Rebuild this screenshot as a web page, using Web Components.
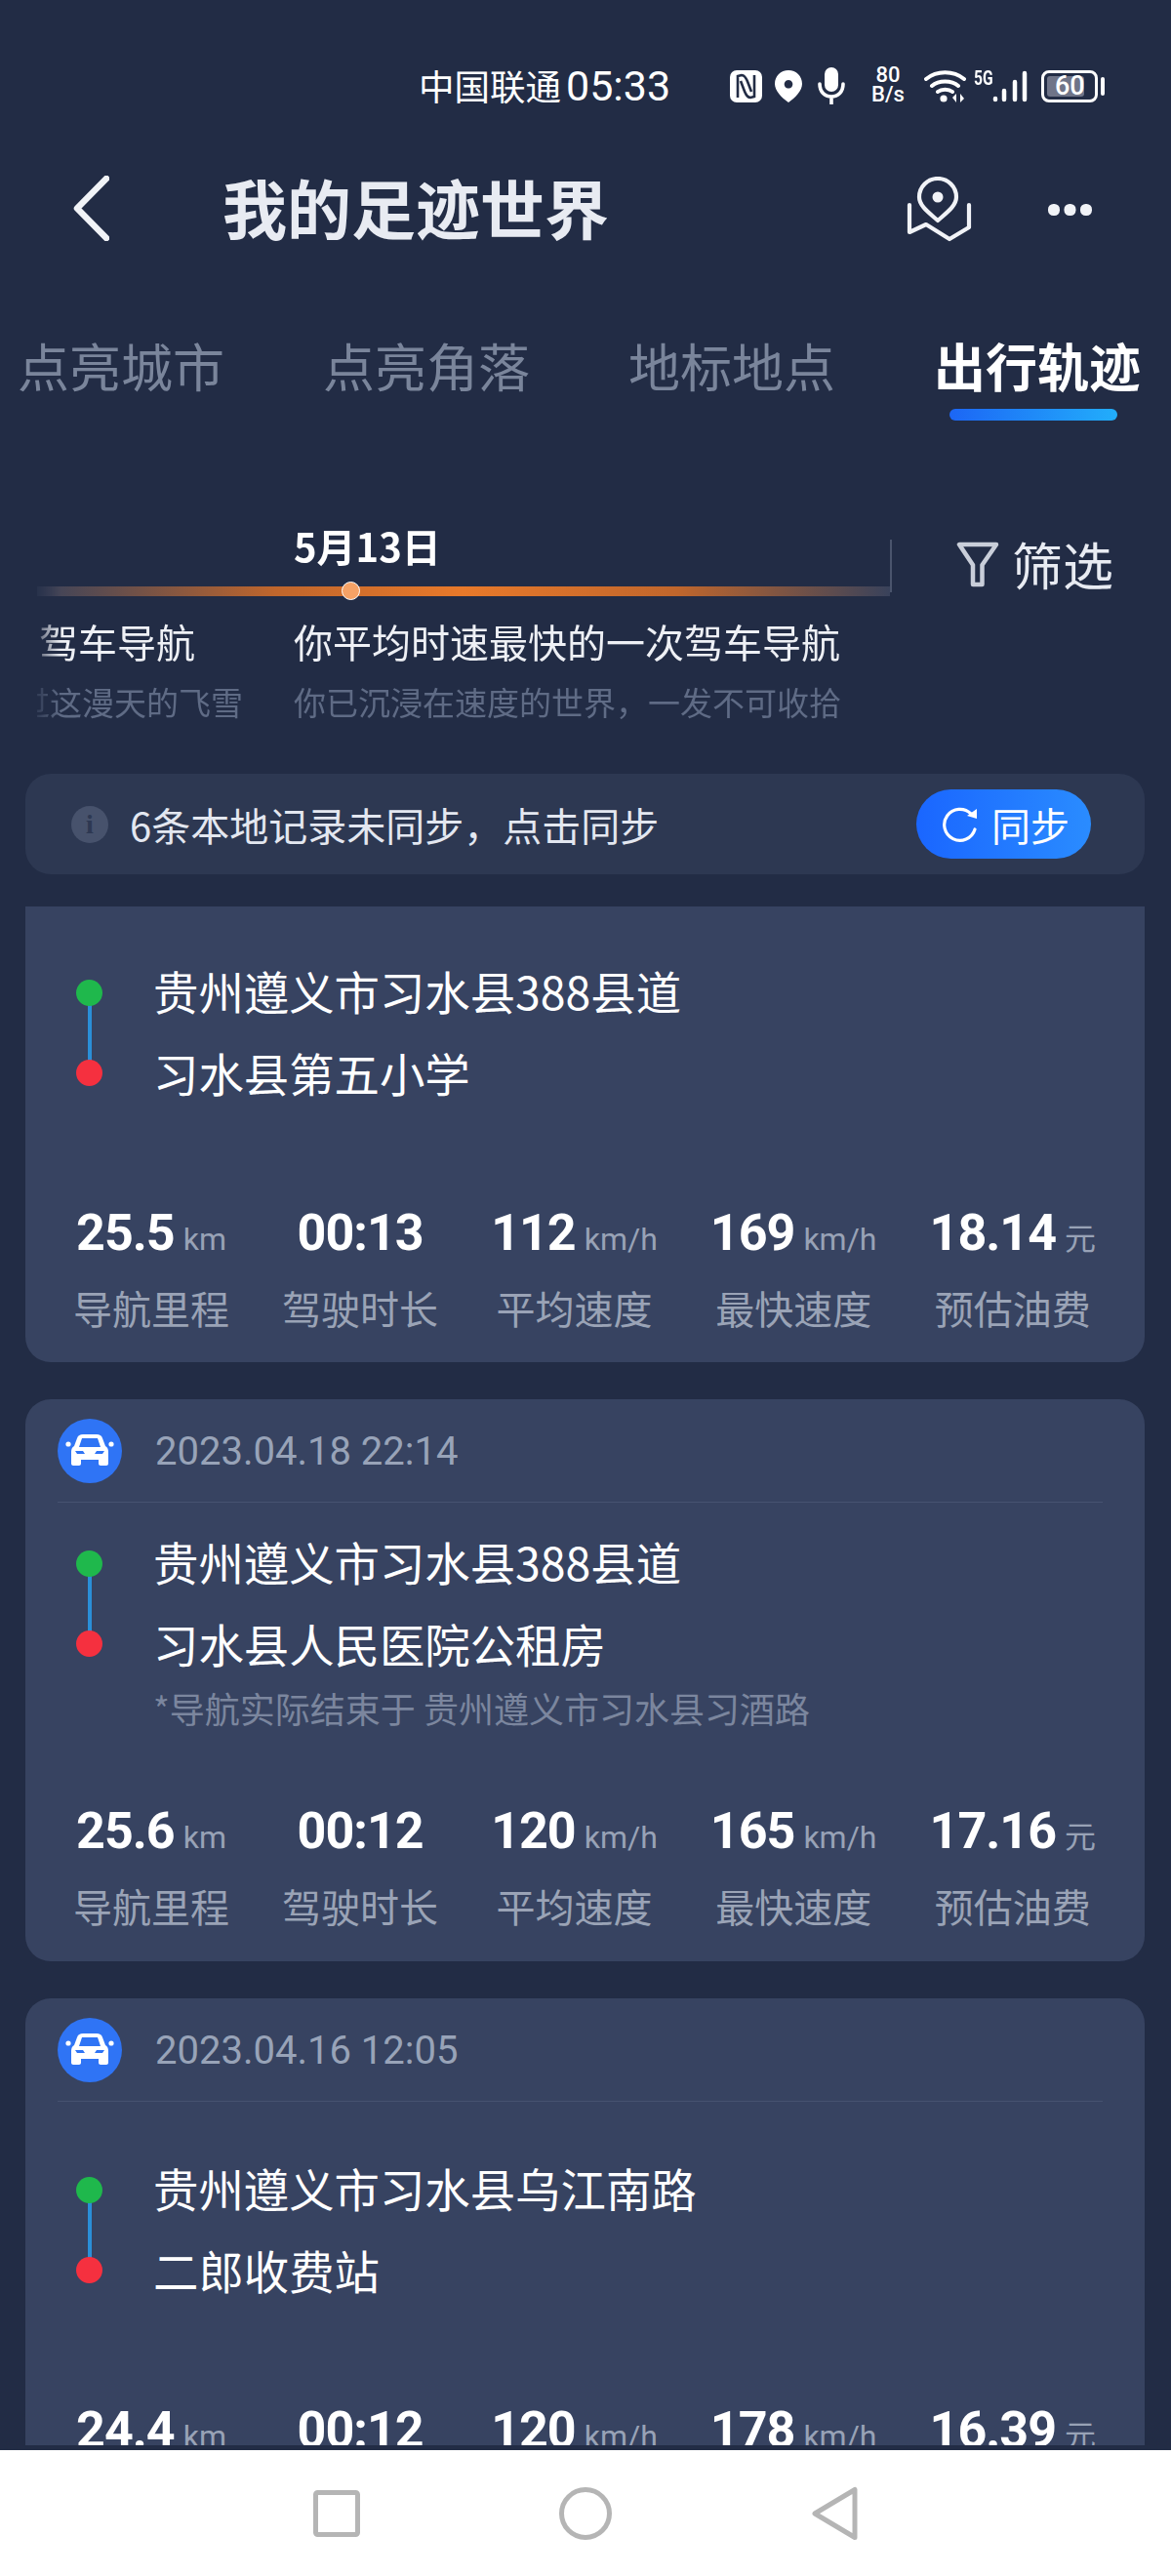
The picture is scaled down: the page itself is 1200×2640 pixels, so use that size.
<!DOCTYPE html>
<html lang="zh"><head><meta charset="utf-8"><title>我的足迹世界</title>
<style>
html,body{margin:0;padding:0;background:#222c45}
body{width:1200px;height:2640px;overflow:hidden;font-family:"Noto Sans CJK SC","Noto Sans",sans-serif}
</style></head><body>
<app-shell>
  <status-bar></status-bar>
  <app-header>我的足迹世界</app-header>
  <tab-bar></tab-bar>
  <trip-timeline></trip-timeline>
  <sync-banner>6条本地记录未同步，点击同步</sync-banner>
  <trip-list>
    <trip-card cut>
      <span slot="from">贵州遵义市习水县388县道</span><span slot="to">习水县第五小学</span>
      <trip-stat value="25.5" unit="km" label="导航里程"></trip-stat><trip-stat value="00:13" label="驾驶时长"></trip-stat><trip-stat value="112" unit="km/h" label="平均速度"></trip-stat><trip-stat value="169" unit="km/h" label="最快速度"></trip-stat><trip-stat value="18.14" unit="元" label="预估油费"></trip-stat>
    </trip-card>
    <trip-card date="2023.04.18 22:14">
      <span slot="from">贵州遵义市习水县388县道</span><span slot="to">习水县人民医院公租房</span><span slot="note">*导航实际结束于 贵州遵义市习水县习酒路</span>
      <trip-stat value="25.6" unit="km" label="导航里程"></trip-stat><trip-stat value="00:12" label="驾驶时长"></trip-stat><trip-stat value="120" unit="km/h" label="平均速度"></trip-stat><trip-stat value="165" unit="km/h" label="最快速度"></trip-stat><trip-stat value="17.16" unit="元" label="预估油费"></trip-stat>
    </trip-card>
    <trip-card date="2023.04.16 12:05">
      <span slot="from">贵州遵义市习水县乌江南路</span><span slot="to">二郎收费站</span>
      <trip-stat value="24.4" unit="km" label="导航里程"></trip-stat><trip-stat value="00:12" label="驾驶时长"></trip-stat><trip-stat value="120" unit="km/h" label="平均速度"></trip-stat><trip-stat value="178" unit="km/h" label="最快速度"></trip-stat><trip-stat value="16.39" unit="元" label="预估油费"></trip-stat>
    </trip-card>
  </trip-list>
  <nav-bar></nav-bar>
</app-shell>
<script>
const CJK='"Noto Sans CJK SC","Noto Sans",sans-serif';
function def(name,html){
  customElements.define(name,class extends HTMLElement{
    constructor(){super();this.attachShadow({mode:'open'});}
    connectedCallback(){if(!this.shadowRoot.firstChild)this.shadowRoot.innerHTML=typeof html==='function'?html(this):html;}
  });
}
def('app-shell',`<style>:host{display:flex;flex-direction:column;width:1200px;height:2640px;background:#222c45;color:#fff;font-family:${CJK}}</style><slot></slot>`);

def('status-bar',`<style>
:host{display:flex;align-items:center;height:150px;box-sizing:border-box;padding:26px 0 0 429px;color:#fff;flex:none}
.t{font-size:36.500px;line-height:40px;white-space:nowrap;width:151px}
.c{font:43px/40px Roboto,sans-serif;width:111px}
svg{display:block;flex:none}
.sp{font:500 22px/20px Roboto,sans-serif;text-align:center;width:40px;margin:0 17px 0 24px;transform:translateY(-1px)}
.g{font:700 20px/14px Roboto,sans-serif;width:18px;margin:0 0 0 8px;align-self:flex-start;margin-top:47px;transform:scaleX(.78);transform-origin:0 0;white-space:nowrap}
.bat{position:relative;width:58px;height:33px;box-sizing:border-box;border:3px solid #fff;border-radius:8px;margin-left:14px;flex:none}
.bat i{position:absolute;left:3px;top:3px;bottom:3px;width:38px;background:#6f7488;border-radius:3px}
.bat b{position:relative;display:block;font:500 27px/27px Roboto,sans-serif;padding-left:11px}
.tip{width:4px;height:19px;border-radius:2px;background:#fff;margin-left:3px;flex:none}
</style>
<span class="t">中国联通</span><span class="c">05:33</span>
<svg width="33" height="33" viewBox="0 0 33 33" style="margin-left:57px"><rect width="33" height="33" rx="7" fill="#fff"/><path d="M8 28V6l4-1c3 0 5 3 7 9l3 8M25 5v22l-4 1c-3 0-5-3-7-9l-3-8" fill="none" stroke="#222c45" stroke-width="2.6"/></svg>
<svg width="28" height="33" viewBox="0 0 28 33" style="margin-left:13px"><path fill="#fff" fill-rule="evenodd" d="M14 0c8 0 14 6 14 14 0 7-7 14-14 19C7 28 0 21 0 14 0 6 6 0 14 0zm0 10a4.300 4.300 0 1 0 .01 0z"/></svg>
<svg width="28" height="38" viewBox="0 0 28 38" style="margin-left:16px"><rect x="7" y="0" width="14" height="25" rx="7" fill="#fff"/><path d="M2 17c0 8 5 13 12 13s12-5 12-13M14 30v8" fill="none" stroke="#fff" stroke-width="3.600" stroke-linecap="round"/></svg>
<div class="sp">80<br>B/s</div>
<svg width="43" height="33" viewBox="0 0 43 33"><path d="M2 9c11-9 28-9 39 0M8 16c7-6 20-6 27 0M14 22c4-3 11-3 15 0" fill="none" stroke="#fff" stroke-width="4" stroke-linecap="round"/><circle cx="20" cy="29" r="3.600" fill="#fff"/><path d="M29 28l4-4v9zM37 24l4 5-4 4z" fill="#fff"/></svg>
<span class="g">5G</span>
<svg width="36" height="33" viewBox="0 0 36 33" style="margin-left:1px"><g stroke="#fff" stroke-width="4.500" stroke-linecap="round"><path d="M3 29v1M12 21v9M23 12v18M33 3v27"/></g></svg>
<div class="bat"><i></i><b>60</b></div><div class="tip"></div>`);

def('app-header',`<style>
:host{display:flex;align-items:center;height:126px;box-sizing:border-box;padding:0 0 0 75px;flex:none}
.t{font-size:66px;font-weight:700;color:#e8ebf2;margin:-5px 0 0 116px;line-height:90px;flex:1;white-space:nowrap}
svg{display:block;flex:none}
.ic{margin-top:3px}
</style>
<svg width="37" height="67" viewBox="0 0 37 67"><path d="M34 3L4 33.500 34 64" fill="none" stroke="#f1f3f7" stroke-width="6.500" stroke-linecap="round" stroke-linejoin="round"/></svg>
<span class="t"><slot></slot></span>
<svg class="ic" width="70" height="68" viewBox="0 0 70 68" style="margin-right:75px"><g fill="none" stroke="#f1f3f7" stroke-width="4.200" stroke-linejoin="round" stroke-linecap="round"><path d="M33 45C24 37 14 30 14 21a19 19 0 0 1 38 0C52 30 42 37 33 45z"/><path d="M4 29V57L21 49 45 64 65 52V29"/></g><circle cx="33" cy="21" r="5.500" fill="#f1f3f7"/></svg>
<svg class="ic" width="48" height="14" viewBox="0 0 48 14" style="margin-right:79px"><g fill="#f1f3f7"><rect x="1" y="1" width="12" height="12" rx="5.500"/><rect x="17.500" y="1" width="12" height="12" rx="5.500"/><rect x="34" y="1" width="12" height="12" rx="5.500"/></g></svg>`);

def('tab-bar',`<style>
:host{display:flex;gap:101px;height:245px;box-sizing:border-box;padding:60px 0 0 18px;font-size:53px;line-height:76px;color:#7a859b;white-space:nowrap;flex:none}
.a{position:relative;color:#fff;font-weight:700;height:76px}
.a::after{content:"";position:absolute;left:16px;right:24px;top:83px;height:12px;border-radius:6px;background:linear-gradient(90deg,#1c66f5,#22aefb)}
</style><span>点亮城市</span><span>点亮角落</span><span>地标地点</span><span class="a">出行轨迹</span>`);

def('trip-timeline',`<style>
:host{display:grid;grid-template-columns:874px 1fr;height:272px;box-sizing:border-box;padding:0 0 0 38px;flex:none}
.l{position:relative;overflow:hidden;height:272px;-webkit-mask-image:linear-gradient(90deg,#0004,#000 24px);mask-image:linear-gradient(90deg,#0004,#000 24px)}
.d{font-size:40px;font-weight:700;line-height:48px;height:48px;margin-left:263px;padding-top:14px;white-space:nowrap}
.track{height:10px;margin-top:18px;background:linear-gradient(90deg,#39425b 0,#c0662c 28%,#e8792a 50%,#c0662c 75%,#39425b 100%)}
.dot{position:absolute;left:312px;top:75px;width:17px;height:17px;border-radius:50%;background:#f5a266;border:1.500px solid #fff}
.items{display:flex;margin-top:18px;white-space:nowrap}
.it1{width:263px;flex:none}
.ti{font-size:40px;line-height:56px;color:#eef0f5}
.su{font-size:33px;line-height:52px;margin-top:8px;color:#5f6b85}
.r{display:flex;align-items:flex-start}
.sep{width:2px;height:54px;background:#4a546c;margin-top:32px}
.f{display:flex;align-items:center;margin:22px 0 0 66px;font-size:52px;line-height:70px;color:#e8ebf2;white-space:nowrap}
.f svg{margin-right:13px;display:block}
</style>
<div class="l"><div class="d">5月13日</div><div class="track"></div><div class="dot"></div>
<div class="items"><div class="it1"><div class="ti" style="margin-left:2px">驾车导航</div><div class="su" style="margin-left:-20px">过这漫天的飞雪</div></div>
<div><div class="ti">你平均时速最快的一次驾车导航</div><div class="su">你已沉浸在速度的世界，一发不可收拾</div></div></div></div>
<div class="r"><div class="sep"></div><div class="f"><svg width="44" height="47" viewBox="0 0 44 47"><path d="M3 3H41L26.500 24V44H17V24z" fill="none" stroke="#c9ced9" stroke-width="4.500" stroke-linejoin="round"/></svg>筛选</div></div>`);

def('sync-banner',`<style>
:host{display:flex;align-items:center;height:103px;margin:0 27px 0 26px;padding:0 55px 0 47px;border-radius:26px;background:#2d3852;flex:none}
.i{width:38px;height:38px;border-radius:50%;background:#47526c;color:#2d3852;font:700 28px/38px "Liberation Serif",serif;text-align:center;margin-right:22px}
.t{flex:1;font-size:40px;color:#e3e7f0;white-space:nowrap}
.b{display:flex;align-items:center;width:179px;height:71px;box-sizing:border-box;padding-left:27px;border-radius:36px;background:linear-gradient(90deg,#1a66ff,#2a8cff);color:#fff;font-size:40px}
svg{margin-right:13px;display:block}
</style><span class="i">i</span><span class="t"><slot></slot></span>
<div class="b"><svg width="37" height="38" viewBox="0 0 37 38"><path d="M29 8A16 16 0 1 0 33 24" fill="none" stroke="#fff" stroke-width="3.200" stroke-linecap="round"/><path d="M25 10l10 3V3z" fill="#fff"/></svg>同步</div>`);

def('trip-list',`<style>:host{display:flex;flex-direction:column;gap:38px;height:1577px;flex:none;margin-top:33px;padding:0 27px 0 26px;overflow:hidden}</style><slot></slot>`);

def('trip-stat',t=>`<style>
:host{display:flex;flex-direction:column;align-items:center;white-space:nowrap}
.v{display:flex;align-items:baseline;line-height:60px;height:60px}
b{font:700 52px/60px Roboto,sans-serif;letter-spacing:-1px;color:#fff}
i{font:400 32px/60px Roboto,"Noto Sans CJK SC",sans-serif;color:#98a2b6;margin-left:9px;font-style:normal}
.l{font-size:40px;line-height:56px;margin-top:18px;color:#9aa3b6}
</style><div class="v"><b>${t.getAttribute('value')}</b>${t.getAttribute('unit')?`<i>${t.getAttribute('unit')}</i>`:''}</div><div class="l">${t.getAttribute('label')}</div>`);

def('trip-card',t=>{
const cut=t.hasAttribute('cut');const note=!!t.querySelector('[slot=note]');
return `<style>
:host{display:block;flex:none;background:#374361;border-radius:${cut?'0 0 26px 26px':'26px'};box-sizing:border-box;height:${cut?467:576}px}
.h{display:flex;align-items:center;height:106px;margin:0 43px 0 33px;border-bottom:1.500px solid #465270;box-sizing:border-box}
.h svg{display:block;margin-right:34px}
.h span{font:40px/50px Roboto,sans-serif;color:#98a3b8;margin-top:2px}
.r{height:${cut?265:270}px;display:flex;flex-direction:column;justify-content:center;padding:0 0 ${note?20:10}px 131px;box-sizing:border-box}
.ln{font-size:46.400px;line-height:84px;color:#fff;white-space:nowrap}
.n{font-size:36px;line-height:46px;color:#7b869e;white-space:nowrap;margin-top:1px}
.s{display:flex;justify-content:space-between;padding:${cut?40:37}px 50px 0 49px}
.w{display:flex;flex-direction:column;position:relative}
.m{position:absolute;left:-79px;top:31px;width:27px;height:110px}
.m i{position:absolute;left:0;width:27px;height:27px;border-radius:50%}
.m u{position:absolute;left:12px;top:20px;width:4px;height:70px;background:#2a8fd8}
</style>
${cut?'':`<div class="h"><svg width="66" height="66" viewBox="0 0 66 66"><circle cx="33" cy="33" r="33" fill="#2f74f5"/><g fill="#fff"><path d="M20 20c1-3 3-4 6-4h14c3 0 5 1 6 4l3 8c2 1 3 3 3 6v12c0 1-1 2-2 2h-6c-1 0-2-1-2-2v-4H24v4c0 1-1 2-2 2h-6c-1 0-2-1-2-2V34c0-3 1-5 3-6z"/><circle cx="11" cy="26" r="2.600"/><circle cx="55" cy="26" r="2.600"/></g><path d="M25 20h16l3 9H22z" fill="#2f74f5"/><path d="M18 33h8l2 3h-8zM48 33h-8l-2 3h8z" fill="#2f74f5"/></svg><span>${t.getAttribute('date')}</span></div>`}
<div class="r"><div class="w"><div class="m"><u></u><i style="top:0;background:#1fb84c"></i><i style="top:82px;background:#f5303f"></i></div>
<div class="ln"><slot name="from"></slot></div><div class="ln"><slot name="to"></slot></div>${note?'<div class="n"><slot name="note"></slot></div>':''}</div></div>
<div class="s"><slot></slot></div>`;});

def('nav-bar',`<style>
:host{display:flex;flex:none;height:130px;margin-top:5px;background:#fff;align-items:center;padding-left:321px}
svg{display:block}
</style>
<svg width="48" height="48" viewBox="0 0 48 48"><rect x="2.500" y="2.500" width="43" height="43" rx="2" fill="none" stroke="#b5b5b5" stroke-width="5"/></svg>
<svg width="54" height="54" viewBox="0 0 54 54" style="margin-left:204px"><circle cx="27" cy="27" r="24.500" fill="none" stroke="#b5b5b5" stroke-width="5"/></svg>
<svg width="47" height="56" viewBox="0 0 47 56" style="margin-left:205px"><path d="M44 3.500v49L3 28z" fill="none" stroke="#b5b5b5" stroke-width="5" stroke-linejoin="round"/></svg>`);
</script>
</body></html>
